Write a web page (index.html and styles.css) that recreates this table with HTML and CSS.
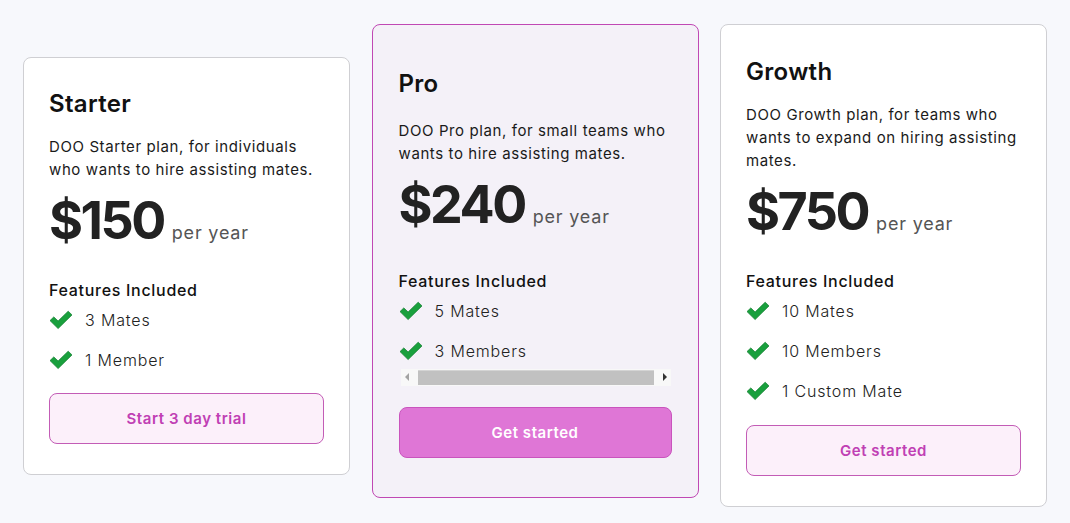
FILE: index.html
```html
<!DOCTYPE html>
<html lang="en">
<head>
<meta charset="utf-8">
<title>Pricing</title>
<link rel="stylesheet" href="styles.css">
</head>
<body>
<svg width="0" height="0" class="defs">
  <defs>
    <symbol id="check" viewBox="0 0 24 20">
      <path d="M1 10.6 L4.8 6.9 L9.1 11 L19.2 1.2 L23 4.9 L9.1 18.6 Z" fill="#19a03d" stroke="#0d7a2b" stroke-width="0.7" stroke-linejoin="round"/>
    </symbol>
  </defs>
</svg>
<main class="plans">
  <section class="card">
    <h2 class="title">Starter</h2>
    <p class="desc">DOO Starter plan, for individuals who wants to hire assisting mates.</p>
    <div class="price"><span class="amount">$150</span><span class="period">per year</span></div>
    <h3 class="features-title">Features Included</h3>
    <ul class="features">
      <li><svg class="check"><use href="#check"/></svg><span>3 Mates</span></li>
      <li><svg class="check"><use href="#check"/></svg><span>1 Member</span></li>
    </ul>
    <button class="btn">Start 3 day trial</button>
  </section>

  <section class="card card-pro">
    <h2 class="title">Pro</h2>
    <p class="desc">DOO Pro plan, for small teams who wants to hire assisting mates.</p>
    <div class="price"><span class="amount">$240</span><span class="period">per year</span></div>
    <h3 class="features-title">Features Included</h3>
    <ul class="features">
      <li><svg class="check"><use href="#check"/></svg><span>5 Mates</span></li>
      <li><svg class="check"><use href="#check"/></svg><span>3 Members</span></li>
    </ul>
    <div class="hscroll">
      <span class="arrow arrow-left"></span>
      <span class="thumb"></span>
      <span class="arrow arrow-right"></span>
    </div>
    <button class="btn btn-solid">Get started</button>
  </section>

  <section class="card card-growth">
    <h2 class="title">Growth</h2>
    <p class="desc">DOO Growth plan, for teams who wants to expand on hiring assisting mates.</p>
    <div class="price"><span class="amount">$750</span><span class="period">per year</span></div>
    <h3 class="features-title">Features Included</h3>
    <ul class="features">
      <li><svg class="check"><use href="#check"/></svg><span>10 Mates</span></li>
      <li><svg class="check"><use href="#check"/></svg><span>10 Members</span></li>
      <li><svg class="check"><use href="#check"/></svg><span>1 Custom Mate</span></li>
    </ul>
    <button class="btn">Get started</button>
  </section>
</main>
</body>
</html>
```

FILE: styles.css
```css
* { box-sizing: border-box; }

html, body {
  margin: 0;
  padding: 0;
}

body {
  background: #f7f8fc;
  font-family: "Inter", "Open Sans", sans-serif;
  color: #111;
  width: 1070px;
  height: 523px;
  overflow: hidden;
}

.defs { position: absolute; }

.plans {
  display: flex;
  align-items: center;
  gap: 21.5px;
  padding: 8px 23px 0;
  height: 523px;
}

.card {
  width: 327px;
  flex: none;
  background: #fff;
  border: 1px solid #cfcfd3;
  border-radius: 8px;
  padding: 31px 25px 30px;
  display: flex;
  flex-direction: column;
}

.card-pro {
  background: #f4f1f8;
  border-color: #c048b4;
  padding: 44px 26px 39px;
  margin-bottom: 10px;
}

.card-growth {
  padding-top: 32px;
}

.title {
  margin: 0;
  font-size: 24px;
  font-weight: 600;
  line-height: 30px;
  color: #111;
  letter-spacing: 0.3px;
}

.desc {
  margin: 16px 0 0;
  font-size: 15px;
  line-height: 23px;
  color: #1a1a1a;
  letter-spacing: 0.6px;
}

.card-pro .desc { margin-top: 20px; }

.price {
  display: flex;
  align-items: baseline;
  gap: 8px;
  margin-top: 8px;
  height: 64px;
}

.amount {
  font-size: 52px;
  font-weight: 700;
  line-height: 64px;
  color: #222;
  letter-spacing: -2.5px;
}

.period {
  font-size: 18px;
  color: #555;
  letter-spacing: 0.8px;
}

.features-title {
  margin: 25px 0 0;
  font-size: 16px;
  font-weight: 500;
  line-height: 24px;
  color: #111;
  letter-spacing: 0.7px;
}

.card-pro .features-title { margin-top: 32px; }

.features {
  list-style: none;
  margin: 6px 0 0;
  padding: 0;
  display: flex;
  flex-direction: column;
  gap: 16px;
}

.features li {
  display: flex;
  align-items: center;
  gap: 12px;
  height: 24px;
  font-size: 16px;
  font-weight: 300;
  color: #222;
  letter-spacing: 0.85px;
}

.check {
  width: 24px;
  height: 20px;
  flex: none;
}

.hscroll {
  margin: 6px 1px 0 2px;
  height: 17px;
  background: #f8f8f8;
  display: flex;
  align-items: center;
  padding: 0 4px;
  gap: 9px;
}

.thumb {
  flex: 1;
  height: 15px;
  background: #c1c1c1;
  border-top: 1px solid #d4d4d4;
}

.arrow {
  width: 0;
  height: 0;
  border-top: 4px solid transparent;
  border-bottom: 4px solid transparent;
  flex: none;
}

.arrow-left { border-right: 4px solid #a3a3a3; }
.arrow-right { border-left: 4px solid #333; }

.btn {
  margin-top: 21px;
  height: 51px;
  border: 1px solid #c35cb6;
  border-radius: 8px;
  background: #fcf0fa;
  color: #c040b4;
  font-family: inherit;
  font-size: 15px;
  font-weight: 600;
  letter-spacing: 0.55px;
  width: 100%;
}

.card-growth .btn { margin-top: 22px; }

.btn-solid {
  margin-top: 21px;
  background: #df76d6;
  border-color: #c954bd;
  color: #fff;
}
```
